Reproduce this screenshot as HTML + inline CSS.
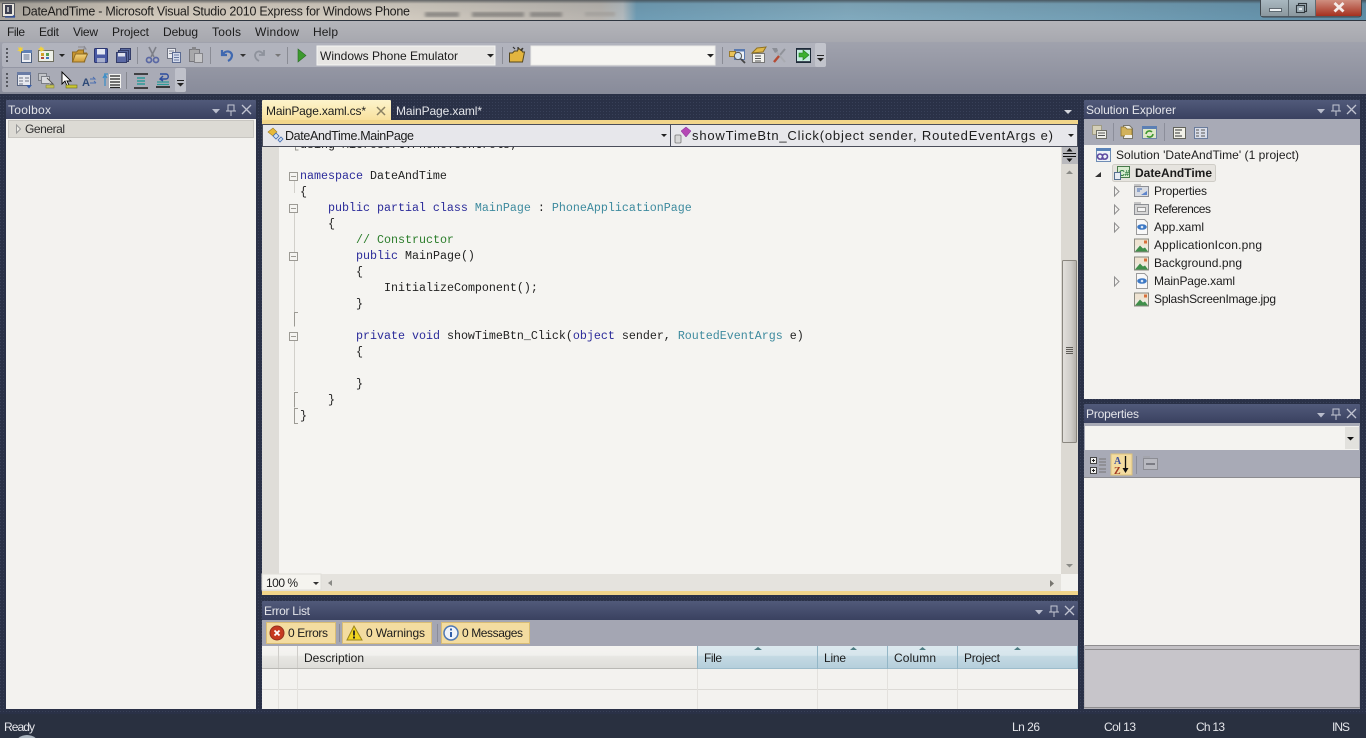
<!DOCTYPE html>
<html><head><meta charset="utf-8"><title>DateAndTime</title>
<style>
html,body{margin:0;padding:0;background:#293040;width:1366px;height:738px;overflow:hidden}
svg{display:block}
text{font-family:"Liberation Sans",sans-serif;font-size:12px;fill:#1c1c1c}
.m{font-family:"Liberation Mono",monospace;font-size:11.67px;fill:#222}
.k{fill:#2b2b9a}.t{fill:#3d8a9e}.c{fill:#2b7d2b}
.w{fill:#e4e5ea}
</style></head><body>
<svg width="1366" height="738" viewBox="0 0 1366 738" xmlns="http://www.w3.org/2000/svg">
<defs>
<linearGradient id="tb" x1="0" x2="1" y1="0" y2="0"><stop offset="0" stop-color="#a9a49c"/><stop offset=".1" stop-color="#d4cbbd"/><stop offset=".3" stop-color="#d3ccc1"/><stop offset=".44" stop-color="#b9b5b0"/><stop offset=".456" stop-color="#b4bcc0"/><stop offset=".466" stop-color="#6f9db5"/><stop offset=".62" stop-color="#82abbf"/><stop offset=".8" stop-color="#74a0b6"/><stop offset="1" stop-color="#5f8ea8"/></linearGradient>
<linearGradient id="tbs" x1="0" x2="0" y1="0" y2="1"><stop offset="0" stop-color="#3a3f44" stop-opacity=".75"/><stop offset=".18" stop-color="#3a3f44" stop-opacity=".1"/><stop offset="1" stop-color="#3a3f44" stop-opacity="0"/></linearGradient>
<linearGradient id="mn" x1="0" x2="0" y1="0" y2="1"><stop offset="0" stop-color="#b4b5ba"/><stop offset="1" stop-color="#a7a8af"/></linearGradient>
<linearGradient id="tbar" x1="0" x2="0" y1="0" y2="1"><stop offset="0" stop-color="#a0a2ad"/><stop offset="1" stop-color="#888b9a"/></linearGradient>
<linearGradient id="ttl" x1="0" x2="0" y1="0" y2="1"><stop offset="0" stop-color="#515a7a"/><stop offset="1" stop-color="#3a4160"/></linearGradient>
<linearGradient id="tab" x1="0" x2="0" y1="0" y2="1"><stop offset="0" stop-color="#fdf4cc"/><stop offset="1" stop-color="#f8e09b"/></linearGradient>
<linearGradient id="hdr" x1="0" x2="0" y1="0" y2="1"><stop offset="0" stop-color="#f5f4f1"/><stop offset=".4" stop-color="#f2f1ee"/><stop offset=".45" stop-color="#e8e7e3"/><stop offset="1" stop-color="#dddcd8"/></linearGradient>
<linearGradient id="hdb" x1="0" x2="0" y1="0" y2="1"><stop offset="0" stop-color="#dce9ef"/><stop offset=".4" stop-color="#d6e5ec"/><stop offset=".45" stop-color="#c4d9e3"/><stop offset="1" stop-color="#b4cedb"/></linearGradient>
<linearGradient id="thumb" x1="0" x2="1" y1="0" y2="0"><stop offset="0" stop-color="#e2e0dc"/><stop offset=".6" stop-color="#cfccc8"/><stop offset="1" stop-color="#b3afa9"/></linearGradient>
<linearGradient id="red" x1="0" x2="0" y1="0" y2="1"><stop offset="0" stop-color="#cf8f80"/><stop offset="1" stop-color="#a5301f"/></linearGradient>
<linearGradient id="wb" x1="0" x2="0" y1="0" y2="1"><stop offset="0" stop-color="#a9b8c0"/><stop offset="1" stop-color="#8b989f"/></linearGradient>
<linearGradient id="fld" x1="0" x2="0" y1="0" y2="1"><stop offset="0" stop-color="#f4d681"/><stop offset="1" stop-color="#cf9a35"/></linearGradient>
<filter id="bl"><feGaussianBlur stdDeviation="1.6"/></filter>
<pattern id="dots" width="3" height="3" patternUnits="userSpaceOnUse"><rect width="3" height="3" fill="#2a3147"/><rect width="1" height="1" fill="#384058"/></pattern>

<g id="hdc"><path d="M0 3h8l-4 4.500z" fill="#b9bdcc"/><path d="M16 -1h6v6h-6zM19 5v5M14 5h10" fill="none" stroke="#c4c7d3"/><path d="M30 -1l9 9M39 -1l-9 9" stroke="#c0c3d0" stroke-width="1.300"/></g>
<path id="tri" d="M0 0l4.500 4.500-4.500 4.500z" fill="#f3f2ef" stroke="#8f8f8f"/>
<g id="img"><rect x=".5" y=".5" width="14" height="13" fill="#eeeadf" stroke="#8a8a80"/><rect x="1" y="1" width="13" height="6" fill="#efe4d2"/><path d="M1 13l5-6 3 3 2-1 3 4z" fill="#3f8f4a"/><path d="M10 2h3v3h-3z" fill="#d8703a"/></g>
<g id="xaml"><path d="M2.500 .5h8l3 3v12h-11z" fill="#f8f8f8" stroke="#9a9a9a"/><ellipse cx="8" cy="8" rx="4.800" ry="2.800" fill="#3c78c4"/><circle cx="8" cy="8" r="1.300" fill="#dce8f7"/></g>
</defs>

<!-- backgrounds -->
<rect width="1366" height="738" fill="#293040"/>
<rect y="94" width="1366" height="620" fill="url(#dots)"/>
<rect width="1366" height="21" fill="url(#tb)"/>
<g filter="url(#bl)" fill="#8b8884"><rect x="425" y="12" width="34" height="5"/><rect x="472" y="12" width="52" height="5"/><rect x="530" y="12" width="32" height="5"/><rect x="585" y="12" width="30" height="4" fill="#a6a39f"/></g>
<rect width="1366" height="21" fill="url(#tbs)"/>
<rect y="20" width="1366" height="1" fill="#2e3640"/>
<rect y="21" width="1366" height="21" fill="url(#mn)"/>
<rect y="42" width="1366" height="52" fill="url(#tbar)"/>

<!-- title bar -->
<g>
<rect x="2.500" y="3.500" width="12" height="13" fill="#e9e6df" stroke="#55565c"/><rect x="5" y="5" width="7" height="9" fill="#3c3f50"/><path d="M8 7v5" stroke="#e0e0e0" stroke-width="1.400"/><path d="M5 17h10M13 15.500l2 1.500" stroke="#2f4fa0" stroke-width="1.200" fill="none"/>
<text x="22" y="15.500" textLength="388" style="font-size:12.500px;fill:#1e1d1c">DateAndTime - Microsoft Visual Studio 2010 Express for Windows Phone</text>
<rect x="1260.500" y="-2" width="101" height="19" rx="3" fill="#5e6a72" stroke="#3f474d"/>
<rect x="1261" y="0" width="27" height="16" fill="url(#wb)"/>
<rect x="1289" y="0" width="26" height="16" fill="url(#wb)"/>
<rect x="1316" y="0" width="45" height="16" fill="url(#red)"/>
<rect x="1269.500" y="8.500" width="12" height="3" fill="#eef2f4" stroke="#47525a" stroke-width=".8"/>
<rect x="1298.500" y="3.500" width="8" height="8" fill="none" stroke="#30383e" stroke-width="1.100"/><rect x="1296.500" y="5.500" width="8" height="7" fill="#9eadb5" stroke="#30383e" stroke-width="1.100"/><rect x="1299" y="8" width="3" height="2" fill="#dfe6ea"/>
<path d="M1334.500 3l9 8.500M1343.500 3l-9 8.500" stroke="#f5ecea" stroke-width="2.800"/>
</g>

<!-- menu -->
<text x="7" y="36" textLength="18">File</text>
<text x="39" y="36" textLength="20">Edit</text>
<text x="73" y="36" textLength="25">View</text>
<text x="112" y="36" textLength="37">Project</text>
<text x="163" y="36" textLength="35">Debug</text>
<text x="212" y="36" textLength="29">Tools</text>
<text x="255" y="36" textLength="44">Window</text>
<text x="313" y="36" textLength="25">Help</text>

<!-- toolbar 1 -->
<rect x="2" y="43" width="824" height="24" rx="2" fill="#b1b3bd"/>
<rect x="815" y="43" width="11" height="24" rx="2" fill="#c2c4cc"/>
<g fill="#55575f"><rect x="6" y="48" width="2" height="2"/><rect x="6" y="52" width="2" height="2"/><rect x="6" y="56" width="2" height="2"/><rect x="6" y="60" width="2" height="2"/></g>
<g stroke="#8a8c95"><path d="M137.500 47v17M210.500 47v17M287.500 47v17M502.500 47v17M722.500 47v17"/></g>
<!-- new project -->
<rect x="21.500" y="50.500" width="10" height="12" fill="#eef0f5" stroke="#4a5e80"/><rect x="22" y="50" width="10" height="3" fill="#5f7fb5"/><path d="M23.500 55h6M23.500 57h6M23.500 59h6" stroke="#5a6a88"/><path d="M20 46l1 2 2-1-1 2.500 2 1-2.500.5-1 2.500-1-2.500-2.500-.5 2-1-1-2.500 2 1z" fill="#f2d23a"/>
<!-- add item -->
<rect x="38.500" y="50.500" width="15" height="11" fill="#eef0e8" stroke="#6f6f60"/><rect x="41" y="53" width="3" height="3" fill="#d0a02a"/><rect x="46" y="53" width="3" height="3" fill="#57a050"/><rect x="41" y="57" width="3" height="2" fill="#b04a3a"/><rect x="46" y="57" width="3" height="2" fill="#3f74c0"/><path d="M41 46l1 2 2-1-1 2 2 1-3 1-1 1-1-2-2-1 2-1z" fill="#f2d23a"/>
<path d="M59 54h6l-3 3z" fill="#222"/>
<!-- open -->
<path d="M72.500 62V52h4l2-2h5v3h3l-2 9z" fill="#c9962f" stroke="#8e6b24"/><path d="M72.500 62l3-8h12l-3.500 8z" fill="url(#fld)" stroke="#8e6b24"/><path d="M78 47h6l2 2M84 46l2 3-3 0" fill="none" stroke="#8a8a90"/>
<!-- save -->
<rect x="94.500" y="48.500" width="13" height="14" rx="1" fill="#4a5aa4" stroke="#2c3670"/><rect x="97" y="49" width="8" height="5.500" fill="#e5e8f2"/><rect x="97" y="58" width="8" height="4.500" fill="#a9b0cc"/>
<!-- save all -->
<rect x="120.500" y="48.500" width="10" height="11" fill="#5a6aa0" stroke="#333c68"/><rect x="118.500" y="50.500" width="10" height="11" fill="#5a6aa0" stroke="#333c68"/><rect x="116.500" y="52.500" width="10" height="10" fill="#5a68a4" stroke="#333c68"/><rect x="118" y="53" width="7" height="3.500" fill="#dfe2ee"/>
<!-- cut -->
<path d="M149 47l5 10M156 47l-5 10" stroke="#7d7f88" stroke-width="1.600"/><circle cx="149" cy="60" r="2.500" fill="none" stroke="#5a68a4" stroke-width="1.700"/><circle cx="156" cy="60" r="2.500" fill="none" stroke="#5a68a4" stroke-width="1.700"/>
<!-- copy -->
<rect x="167.500" y="48.500" width="8" height="10" fill="#e8eaf0" stroke="#6f7382"/><path d="M169 51h5M169 53.500h3" stroke="#7f8492"/><rect x="172.500" y="52.500" width="8" height="10" fill="#d5dcec" stroke="#5a6a92"/><path d="M174 55h5M174 57.500h5M174 60h5" stroke="#6a7aa2"/>
<!-- paste -->
<rect x="189.500" y="49.500" width="10" height="12" fill="#a8a8aa" stroke="#77777c"/><rect x="192" y="47" width="4" height="3" fill="#86868a"/><rect x="194.500" y="53.500" width="8" height="9" fill="#c6c6c8" stroke="#85858a"/>
<!-- undo -->
<path d="M222 50v5h5M223 54c3-4 8-3 9 1 0 3-2 5-4 6" fill="none" stroke="#3f68b0" stroke-width="2.200"/>
<path d="M240 54h6l-3 3z" fill="#333"/>
<!-- redo -->
<path d="M264 50v5h-5M263 54c-3-4-7-3-8 1 0 3 2 5 4 6" fill="none" stroke="#8e929c" stroke-width="1.800"/>
<path d="M275 54h6l-3 3z" fill="#777"/>
<!-- play -->
<path d="M298 49l8 6.500-8 6.500z" fill="#3c9a2e" stroke="#2c6c26" stroke-width=".6"/>
<rect x="317" y="46" width="178" height="19" fill="#e7e6e4" stroke="#f5f5f3"/>
<text x="320" y="60" textLength="138">Windows Phone Emulator</text>
<path d="M487 54h7l-3.500 3.500z" fill="#222"/>
<!-- find in files -->
<path d="M509.500 62V53h3l2-2h3l1-3 2 2 1-1 1 3h2l-2 10z" fill="#e3b53f" stroke="#55471e"/><path d="M513 47l2 2M518 47v3M523 48l-2 3" stroke="#333" stroke-width="1.200"/>
<rect x="531" y="46" width="184" height="19" fill="#f6f5f2" stroke="#ebeae8"/>
<path d="M707 54h7l-3.500 3.500z" fill="#222"/>
<!-- right icons -->
<rect x="734.500" y="49.500" width="10" height="10" fill="#eef2f7" stroke="#5a7ab0"/><rect x="734" y="49" width="11" height="2.500" fill="#5a7ab0"/><path d="M729.500 51.500h6v5h-6z" fill="#e8c35a" stroke="#9b7c2e"/><circle cx="738" cy="56" r="3.600" fill="#cfe1f2" stroke="#555"/><path d="M741 59l4 4" stroke="#444" stroke-width="1.800"/>
<rect x="752.500" y="53.500" width="12" height="9" fill="#f2f2ee" stroke="#777"/><path d="M755 56h6M755 58.500h6M755 61h6" stroke="#555"/><path d="M752 53l5-5 9-1-3 5z" fill="#e0b84a" stroke="#8f7222"/>
<path d="M785 49l-11 13" stroke="#8f9299" stroke-width="2"/><path d="M774 49l11 13" stroke="#a8aab0" stroke-width="2"/><path d="M779 56l-5 6" stroke="#b64a32" stroke-width="2.400"/><path d="M772 48h5l1 3-3 2z" fill="#8b8e96"/>
<rect x="796.500" y="48.500" width="14" height="14" fill="#3f4a58" stroke="#1d2a38"/><rect x="797" y="50" width="13" height="11" fill="#c7ebe0"/><path d="M799 53h4v-3l6 5-6 5v-3h-4z" fill="#3cb030" stroke="#1e7a1e" stroke-width=".6"/>
<path d="M817 55h7v1h-7z" fill="#222"/><path d="M817 58h7l-3.500 3.500z" fill="#222"/>

<!-- toolbar 2 -->
<rect x="2" y="68" width="184" height="24" rx="2" fill="#a9abb6"/>
<rect x="175" y="68" width="11" height="24" rx="2" fill="#bfc1ca"/>
<g fill="#55575f"><rect x="6" y="73" width="2" height="2"/><rect x="6" y="77" width="2" height="2"/><rect x="6" y="81" width="2" height="2"/><rect x="6" y="85" width="2" height="2"/></g>
<path d="M126.500 72v17" stroke="#85878f"/>
<rect x="17.500" y="72.500" width="13" height="13" fill="#e6e8ef" stroke="#5a6682"/><rect x="17" y="72" width="14" height="3" fill="#6a7ca5"/><path d="M19 78h4M25 78h4M19 81h4M25 81h4M19 84h4" stroke="#6e7486"/><path d="M26 85h6l-3 3.500z" fill="#3a5ea8"/>
<rect x="38.500" y="73.500" width="8" height="7" fill="#c2c4c8" stroke="#7b7e86"/><rect x="41.500" y="76.500" width="8" height="7" fill="#d8d9dd" stroke="#7b7e86"/><path d="M47 78l6 6-3 0" fill="#e6e6e6" stroke="#555"/><rect x="46" y="85" width="8" height="3" fill="#c4c256" stroke="#7a7a3a" stroke-width=".5"/>
<path d="M62 72v12l3-3 2 5 2-1-2-4h4z" fill="#fff" stroke="#000" stroke-width=".9"/><rect x="66" y="85" width="11" height="3" fill="#c9c632" stroke="#6a6a20" stroke-width=".6"/>
<text x="82" y="86" style="font-size:11px;fill:#2e4a78;font-weight:bold">A</text><path d="M90 79h5l-2-2M90 83h6M94 81l2 2" fill="none" stroke="#4b6fb0"/>
<path d="M104 74h4M105 74v12M103 78l2-3 2 3" fill="none" stroke="#3f8fc7" stroke-width="1.300"/><rect x="109" y="74" width="12" height="14" fill="#f3f3f0"/><path d="M110 76h10M110 79h10M110 82h10M110 85h10M110 87.500h10" stroke="#222" stroke-width="1.200"/>
<path d="M134 74h14M134 88h14" stroke="#1d1d1d" stroke-width="1.600"/><path d="M137 78h8M137 81h8M137 84h8" stroke="#2c9a98" stroke-width="1.400"/>
<path d="M156 87h14" stroke="#1d1d1d" stroke-width="1.600"/><path d="M157 82h12M157 84.500h12" stroke="#2c9a98" stroke-width="1.300"/><path d="M160 74h6c3 0 3 5 0 5h-5M163 76l-3 3 3 2" fill="none" stroke="#2e4e9e" stroke-width="1.400"/>
<path d="M177 80h7v1h-7z" fill="#222"/><path d="M177 83h7l-3.500 3.500z" fill="#222"/>

<!-- Toolbox -->
<rect x="6" y="100" width="250" height="19" rx="1" fill="url(#ttl)"/>
<rect x="6" y="119" width="250" height="590" fill="#f3f2ef"/>
<text x="8" y="114" textLength="43" class="w" style="fill:#e2e3e8">Toolbox</text>
<use href="#hdc" x="212" y="106"/>
<rect x="8.500" y="120.500" width="245" height="17" fill="#dcdad4" stroke="#c8c6c1"/>
<path d="M16.500 125l4 4-4 4z" fill="#efeee9" stroke="#999"/>
<text x="25" y="133" textLength="40" style="fill:#2f2f2f">General</text>

<!-- Editor tabs -->
<rect x="262" y="100" width="129" height="21" rx="1" fill="url(#tab)"/>
<rect x="262" y="120" width="816" height="4" fill="#f1d58a"/>
<text x="266" y="115" textLength="100">MainPage.xaml.cs*</text>
<path d="M377 107l8 8M385 107l-8 8" stroke="#8b8163" stroke-width="1.500"/>
<text x="396" y="115" textLength="86" class="w">MainPage.xaml*</text>
<path d="M1064 110h8l-4 4z" fill="#d6d8de"/>

<!-- Code area -->
<rect x="262" y="147" width="816" height="428" fill="#f5f4f1"/>
<rect x="262" y="147" width="17" height="428" fill="#dfddd8"/>
<text class="m" x="300" y="148" textLength="217">using Microsoft.Phone.Controls;</text>

<!-- Nav bar -->
<rect x="262" y="124" width="816" height="23" fill="#4a4d5a"/>
<rect x="263" y="125" width="407" height="21" fill="#e7e7eb"/>
<rect x="671" y="125" width="406" height="21" fill="#e7e7eb"/>
<path d="M268 132l5-4 4 4-4 4z" fill="#e6b93a" stroke="#a07c1e" stroke-width=".6"/><path d="M276 133l3 3-3 3-3-3zM281 137l2 2-3 3-2-2z" fill="#cfe0f2" stroke="#3f68b0" stroke-width=".8"/>
<text x="285" y="140" textLength="129" style="font-size:12.500px">DateAndTime.MainPage</text>
<path d="M661 134h6l-3 3z" fill="#222"/>
<rect x="675" y="135" width="6" height="8" rx="1" fill="#d8d8d8" stroke="#777" stroke-width=".8"/><path d="M686 127l5 4-5 6-5-6z" fill="#b548b5" stroke="#7e2a8e" stroke-width=".5"/>
<text x="692" y="140" textLength="361" style="font-size:13px">showTimeBtn_Click(object sender, RoutedEventArgs e)</text>
<path d="M1068 134h6l-3 3z" fill="#222"/>

<!-- outlining -->
<g fill="none" stroke="#9c9a94">
<path d="M295.500 147v3h3"/>
<path d="M294.500 181v12M294.500 213v99M294.500 261v60M294.500 341v50" stroke="#d2d0cb"/>
<path d="M298 312.500h-3.500v14M298 392.500h-3.500v15M298 408.500h-3.500v15h3.500"/>
<rect x="289.500" y="172.500" width="8" height="8" fill="#f5f4f1"/><path d="M291 176.500h5"/>
<rect x="289.500" y="204.500" width="8" height="8" fill="#f5f4f1"/><path d="M291 208.500h5"/>
<rect x="289.500" y="252.500" width="8" height="8" fill="#f5f4f1"/><path d="M291 256.500h5"/>
<rect x="289.500" y="332.500" width="8" height="8" fill="#f5f4f1"/><path d="M291 336.500h5"/>
</g>

<!-- code -->
<text class="m" x="300" y="179"><tspan class="k">namespace</tspan> DateAndTime</text>
<text class="m" x="300" y="195">{</text>
<text class="m" x="328" y="211"><tspan class="k">public partial class</tspan> <tspan class="t">MainPage</tspan> : <tspan class="t">PhoneApplicationPage</tspan></text>
<text class="m" x="328" y="227">{</text>
<text class="m c" x="356" y="243">// Constructor</text>
<text class="m" x="356" y="259"><tspan class="k">public</tspan> MainPage()</text>
<text class="m" x="356" y="275">{</text>
<text class="m" x="384" y="291">InitializeComponent();</text>
<text class="m" x="356" y="307">}</text>
<text class="m" x="356" y="339"><tspan class="k">private void</tspan> showTimeBtn_Click(<tspan class="k">object</tspan> sender, <tspan class="t">RoutedEventArgs</tspan> e)</text>
<text class="m" x="356" y="355">{</text>
<text class="m" x="356" y="387">}</text>
<text class="m" x="328" y="403">}</text>
<text class="m" x="300" y="419">}</text>

<!-- V scroll -->
<rect x="1061" y="147" width="17" height="428" fill="#dcd9d3"/>
<rect x="1062" y="147" width="16" height="17" fill="#b9b9bd"/>
<path d="M1063 153.500h13M1063 156.500h13" stroke="#111"/><path d="M1069.500 148l-3 3.500h6zM1069.500 162l-3-3.500h6z" fill="#111"/>
<path d="M1066 174h7l-3.500-3.500z" fill="#8a8a86"/>
<path d="M1066 564h7l-3.500 3.500z" fill="#8a8a86"/>
<rect x="1062.500" y="260.500" width="14" height="182" rx="1" fill="url(#thumb)" stroke="#8a867f"/>
<path d="M1066 347.500h7M1066 349.500h7M1066 351.500h7M1066 353.500h7" stroke="#5e5b56"/>

<!-- H scroll -->
<rect x="262" y="574" width="816" height="17" fill="#e5e3de"/>
<rect x="1061" y="574" width="17" height="17" fill="#f3f2ef"/>
<rect x="262" y="574" width="59" height="16" fill="#f5f4ef" stroke="#e0ded8"/>
<text x="266" y="587" textLength="32">100 %</text>
<path d="M313 582h6l-3 3z" fill="#333"/>
<path d="M332 580v6l-4-3z" fill="#8a8a86"/>
<path d="M1050 580v7l4-3.500z" fill="#77756f"/>
<rect x="262" y="591" width="816" height="4" fill="#f1d58a"/>

<!-- Error list -->
<rect x="262" y="601" width="816" height="19" rx="1" fill="url(#ttl)"/>
<text x="264" y="615" textLength="46" class="w">Error List</text>
<use href="#hdc" x="1035" y="607"/>
<rect x="262" y="620" width="816" height="26" fill="#a4a6b3"/>
<rect x="266.500" y="622.500" width="69" height="21" fill="#f3dca0" stroke="#d9bd75"/>
<path d="M339.500 624v18M437.500 624v18" stroke="#8a8c99"/>
<rect x="342.500" y="622.500" width="89" height="21" fill="#f3dca0" stroke="#d9bd75"/>
<rect x="441.500" y="622.500" width="88" height="21" fill="#f3dca0" stroke="#d9bd75"/>
<circle cx="277" cy="633" r="7" fill="#c63a20" stroke="#93301e"/><path d="M274.500 630.500l5 5M279.500 630.500l-5 5" stroke="#fff" stroke-width="1.800"/>
<path d="M354 626l8 14h-15z" fill="#f2d421" stroke="#9a8518"/><path d="M354 630.500v5" stroke="#222" stroke-width="1.800"/><rect x="353" y="636.500" width="2" height="2" fill="#222"/>
<circle cx="451" cy="633" r="7" fill="#f0f4fa" stroke="#4e78b4" stroke-width="1.500"/><path d="M451 632v5" stroke="#2f5ea8" stroke-width="2"/><rect x="450" y="628.500" width="2" height="2" fill="#2f5ea8"/>
<text x="288" y="637" textLength="40">0 Errors</text>
<text x="366" y="637" textLength="59">0 Warnings</text>
<text x="462" y="637" textLength="61">0 Messages</text>

<rect x="262" y="646" width="816" height="23" fill="url(#hdr)"/>
<rect x="698" y="646" width="380" height="23" fill="url(#hdb)"/>
<rect x="262" y="668" width="436" height="1" fill="#b9b8b4"/>
<rect x="698" y="668" width="380" height="1" fill="#9dbccb"/>
<path d="M278.500 646v22M297.500 646v22" stroke="#cfcdc9"/>
<path d="M697.500 646v23M817.500 646v23M887.500 646v23M957.500 646v23M1077.500 646v23" stroke="#94b6c6"/>
<text x="304" y="662" textLength="60">Description</text>
<text x="704" y="662" textLength="18">File</text>
<text x="824" y="662" textLength="22">Line</text>
<text x="894" y="662" textLength="42">Column</text>
<text x="964" y="662" textLength="36">Project</text>
<path d="M754 650l4-3 4 3zM850 650l3.500-3 3.500 3zM919 650l3.500-3 3.500 3zM1014 650l3.500-3 3.500 3z" fill="#4e7d83"/>
<rect x="262" y="669" width="816" height="40" fill="#f3f2ef"/>
<rect x="262" y="689" width="816" height="1" fill="#dcdad6"/>
<path d="M278.500 669v40M297.500 669v40M697.500 669v40M817.500 669v40M887.500 669v40M957.500 669v40" stroke="#e3e1dd"/>

<!-- Solution Explorer -->
<rect x="1084" y="100" width="276" height="19" rx="1" fill="url(#ttl)"/>
<text x="1086" y="114" textLength="90" class="w">Solution Explorer</text>
<use href="#hdc" x="1317" y="106"/>
<rect x="1084" y="119" width="276" height="26" fill="#a8aab6"/>
<rect x="1084" y="145" width="276" height="254" fill="#f3f2ef"/>
<path d="M1113.500 123v18M1164.500 123v18" stroke="#8c8e9a"/>
<rect x="1092.500" y="125.500" width="9" height="9" fill="#d5d0b8" stroke="#a09c84"/><rect x="1096.500" y="130.500" width="10" height="8" fill="#eeeee8" stroke="#6f6f68"/><path d="M1098 133h7M1098 135.500h7" stroke="#555"/>
<path d="M1123.500 125.500h6l3 3v10h-9z" fill="#f2f1ea" stroke="#77756b"/><path d="M1121 127h4l2 2h5v7h-11z" fill="#d2b25c" stroke="#8a7330" stroke-width=".8"/><path d="M1125 135h7v3h-7z" fill="#f2f1ea"/>
<rect x="1142.500" y="126.500" width="14" height="12" fill="#dfe8c8" stroke="#6d84a8"/><rect x="1142" y="126" width="15" height="3" fill="#5b7fb4"/><path d="M1146 134a3.500 3.500 0 0 1 6-2M1153 134a3.500 3.500 0 0 1-6 2" fill="none" stroke="#3c962e" stroke-width="1.600"/>
<rect x="1173.500" y="127.500" width="12" height="11" fill="#f2f1e8" stroke="#62625a"/><path d="M1175 130h7M1175 133h5M1175 136h7" stroke="#333"/>
<rect x="1194.500" y="127.500" width="13" height="11" fill="#d9dde8" stroke="#6a7c9c"/><path d="M1196 130h3M1201 130h4M1196 133h3M1201 133h4M1196 136h3M1201 136h4" stroke="#555"/>

<rect x="1096.500" y="148.500" width="14" height="13" fill="#eef2f8" stroke="#6f8db5"/><rect x="1096" y="148" width="15" height="3" fill="#5a83b8"/><path d="M1098 158a2.500 2.500 0 1 1 4 0c1 1.500 4 1.500 5 0a2.500 2.500 0 1 0-4 0c-1 1.500-4 1.500-5 0z" fill="none" stroke="#5f4aa0" stroke-width="1.600"/>
<text x="1116" y="159" textLength="183">Solution 'DateAndTime' (1 project)</text>
<path d="M1095 177l6-5v5z" fill="#333"/>
<rect x="1112.500" y="164.500" width="103" height="17" rx="2" fill="#e6e4df" stroke="#cfcdc7"/>
<rect x="1117.500" y="166.500" width="12" height="11" fill="#d9ecd0" stroke="#487a4a"/><text x="1119" y="176" style="font-size:8px;font-weight:bold;fill:#2e7a40">C#</text><rect x="1114.500" y="172.500" width="6" height="7" fill="#e8ecf2" stroke="#56708f"/>
<text x="1135" y="177" textLength="77" style="font-weight:bold;fill:#1a1a1a">DateAndTime</text>
<use href="#tri" x="1114.500" y="187"/>
<use href="#tri" x="1114.500" y="205"/>
<use href="#tri" x="1114.500" y="223"/>
<use href="#tri" x="1114.500" y="277"/>
<rect x="1134.500" y="186.500" width="14" height="10" fill="#d9dce2" stroke="#8d8f94"/><path d="M1134 186h7v-2h-7z" fill="#c5c5c5"/><path d="M1137 189h5M1137 191h3" stroke="#3f68b0"/><path d="M1141 195l6-4v4z" fill="#5f86cc"/>
<rect x="1134.500" y="204.500" width="14" height="10" fill="#d6d6d6" stroke="#8d8f94"/><path d="M1134 204h7v-2h-7z" fill="#c5c5c5"/><rect x="1137.500" y="207.500" width="8" height="4" fill="#f4f4f4" stroke="#777" stroke-width=".7"/>
<use href="#xaml" x="1134" y="219"/>
<use href="#img" x="1134" y="238.500"/>
<use href="#img" x="1134" y="256.500"/>
<use href="#xaml" x="1134" y="273"/>
<use href="#img" x="1134" y="292.500"/>
<text x="1154" y="195" textLength="53">Properties</text>
<text x="1154" y="213" textLength="57">References</text>
<text x="1154" y="231" textLength="50">App.xaml</text>
<text x="1154" y="249" textLength="108">ApplicationIcon.png</text>
<text x="1154" y="267" textLength="88">Background.png</text>
<text x="1154" y="285" textLength="81">MainPage.xaml</text>
<text x="1154" y="303" textLength="122">SplashScreenImage.jpg</text>

<!-- Properties -->
<rect x="1084" y="404" width="276" height="19" rx="1" fill="url(#ttl)"/>
<text x="1086" y="418" textLength="53" class="w">Properties</text>
<use href="#hdc" x="1317" y="410"/>
<rect x="1084" y="423" width="276" height="30" fill="#a8aab6"/>
<rect x="1085" y="426" width="274" height="24" fill="#f4f3f0"/>
<rect x="1345" y="427" width="14" height="22" fill="#e2e1dd"/>
<path d="M1347 437h7l-3.500 3.500z" fill="#111"/>
<rect x="1084" y="452" width="276" height="25" fill="#a8aab6"/>
<rect x="1111" y="454" width="21" height="21" fill="#f3dca0" stroke="#dcc27c"/>
<path d="M1136.500 456v18" stroke="#8c8e9a"/>
<rect x="1090.500" y="457.500" width="6" height="6" fill="#f2f2f2" stroke="#444"/><rect x="1090.500" y="467.500" width="6" height="6" fill="#f2f2f2" stroke="#444"/><path d="M1092 460.500h3M1093.500 459v3M1092 470.500h3M1093.500 469v3" stroke="#222"/><path d="M1099 459h7M1099 462h7M1099 465h7M1099 469h7M1099 472h7" stroke="#777"/>
<text x="1114" y="464" style="font-size:10px;font-weight:bold;fill:#3a4d9c;font-family:'Liberation Serif',serif">A</text>
<text x="1114" y="474" style="font-size:10px;font-weight:bold;fill:#a33b22;font-family:'Liberation Serif',serif">Z</text>
<path d="M1125.500 456v15" stroke="#111" stroke-width="1.300"/><path d="M1122.500 468h6l-3 5z" fill="#111"/>
<rect x="1143.500" y="458.500" width="14" height="11" fill="#b8b9c0" stroke="#8c8d94"/><path d="M1143 458h7v-2h-7z" fill="#a4a5ad"/><path d="M1146 464h9" stroke="#7b7c84" stroke-width="2"/>
<rect x="1084" y="477" width="276" height="1" fill="#8c8c90"/>
<rect x="1084" y="478" width="276" height="168" fill="#f3f2ef"/>
<rect x="1084" y="645" width="276" height="64" fill="#b5b3b8"/>
<rect x="1085" y="646" width="274" height="3" fill="#c3c1c5"/>
<rect x="1085" y="650" width="274" height="57" fill="#c7c5ca"/>
<path d="M1085 645.500h274M1085 649.500h274" stroke="#8e8d8f"/>
<rect x="1084" y="707" width="276" height="1" fill="#8e8d8f"/>

<!-- status -->
<text x="4" y="731" textLength="31" class="w">Ready</text>
<text x="1012" y="731" textLength="28" class="w">Ln 26</text>
<text x="1104" y="731" textLength="32" class="w">Col 13</text>
<text x="1196" y="731" textLength="29" class="w">Ch 13</text>
<text x="1332" y="731" textLength="18" class="w">INS</text>
<ellipse cx="27" cy="745" rx="12" ry="10" fill="#a9b3bd"/>
</svg>
</body></html>
